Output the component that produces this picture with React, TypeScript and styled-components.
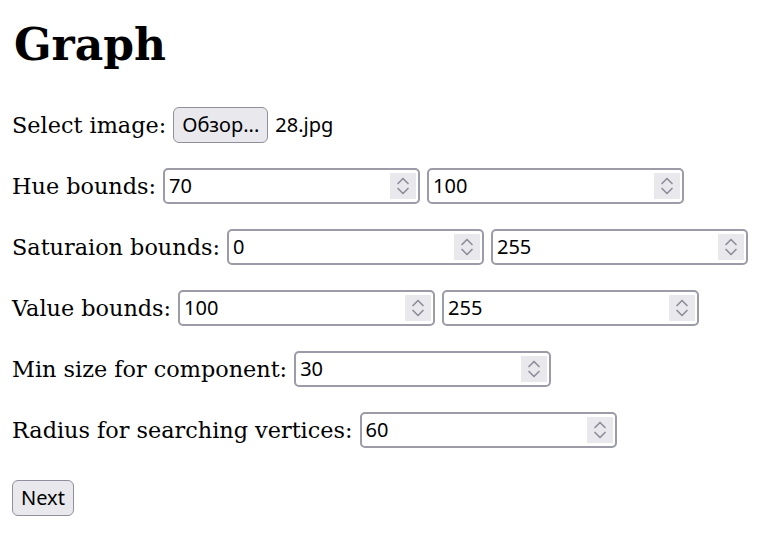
import React from "react";
import styled, { createGlobalStyle } from "styled-components";

const GlobalStyle = createGlobalStyle`
  html, body {
    margin: 0;
    padding: 0;
    background: #ffffff;
    color: #000000;
  }
  body {
    font-family: "DejaVu Serif", "Liberation Serif", serif;
  }
`;

const Page = styled.main`
  padding: 12px;
  display: flex;
  flex-direction: column;
  align-items: flex-start;
`;

const Title = styled.h1`
  margin: 7px 0 0 2px;
  font-size: 44px;
  font-weight: 700;
  line-height: normal;
`;

const Form = styled.form`
  margin-top: 36px;
  display: flex;
  flex-direction: column;
  align-items: flex-start;
  gap: 24px;
`;

const Row = styled.div`
  height: 37px;
  display: flex;
  align-items: center;
  gap: 7px;
`;

const Label = styled.span`
  font-size: 22.35px;
  white-space: nowrap;
`;

const ControlText = styled.span`
  font-family: "Noto Sans", "Open Sans", sans-serif;
  font-size: 20px;
  color: #000;
`;

const GreyButton = styled.button`
  box-sizing: border-box;
  height: 36px;
  padding: 0 8px;
  border: 1.5px solid #8f8f9d;
  border-radius: 6px;
  background: #e9e9ed;
  font-family: "Noto Sans", "Open Sans", sans-serif;
  font-size: 20px;
  color: #000;
  line-height: 1;
  display: inline-flex;
  align-items: center;
`;

const NumberBox = styled.div`
  box-sizing: border-box;
  width: 257px;
  height: 36px;
  border: 2px solid #9c9ca8;
  border-radius: 5px;
  display: flex;
  align-items: center;
  padding: 0 2px 0 4px;
  background: #fff;
`;

const NumberValue = styled.input`
  flex: 1;
  min-width: 0;
  border: none;
  outline: none;
  background: transparent;
  padding: 0;
  font-family: "Noto Sans", "Open Sans", sans-serif;
  font-size: 20px;
  color: #000;
`;

const Spinner = styled.div`
  width: 26px;
  height: 26px;
  background: #e9e9ed;
  display: flex;
  align-items: center;
  justify-content: center;
`;

const NextRow = styled.div`
  margin-top: 32px;
`;

const NextButton = styled(GreyButton)`
  height: 36px;
  padding: 0 8px;
`;

function SpinIcon() {
  return (
    <svg width="16" height="22" viewBox="0 0 16 22" fill="none">
      <path d="M3 8.5 L8 3.5 L13 8.5" stroke="#8f8f9d" strokeWidth="1.7" strokeLinecap="round" strokeLinejoin="round" />
      <path d="M3 13.5 L8 18.5 L13 13.5" stroke="#8f8f9d" strokeWidth="1.7" strokeLinecap="round" strokeLinejoin="round" />
    </svg>
  );
}

function NumberField({ value }: { value: string }) {
  return (
    <NumberBox>
      <NumberValue type="text" defaultValue={value} />
      <Spinner>
        <SpinIcon />
      </Spinner>
    </NumberBox>
  );
}

const fields: { label: string; values: string[] }[] = [
  { label: "Hue bounds:", values: ["70", "100"] },
  { label: "Saturaion bounds:", values: ["0", "255"] },
  { label: "Value bounds:", values: ["100", "255"] },
  { label: "Min size for component:", values: ["30"] },
  { label: "Radius for searching vertices:", values: ["60"] },
];

export default function App() {
  return (
    <>
      <GlobalStyle />
      <Page>
        <Title>Graph</Title>
        <Form onSubmit={(e) => e.preventDefault()}>
          <Row>
            <Label>Select image:</Label>
            <GreyButton type="button">Обзор...</GreyButton>
            <ControlText>28.jpg</ControlText>
          </Row>
          {fields.map((f) => (
            <Row key={f.label}>
              <Label>{f.label}</Label>
              {f.values.map((v, i) => (
                <NumberField key={i} value={v} />
              ))}
            </Row>
          ))}
        </Form>
        <NextRow>
          <NextButton type="button">Next</NextButton>
        </NextRow>
      </Page>
    </>
  );
}
